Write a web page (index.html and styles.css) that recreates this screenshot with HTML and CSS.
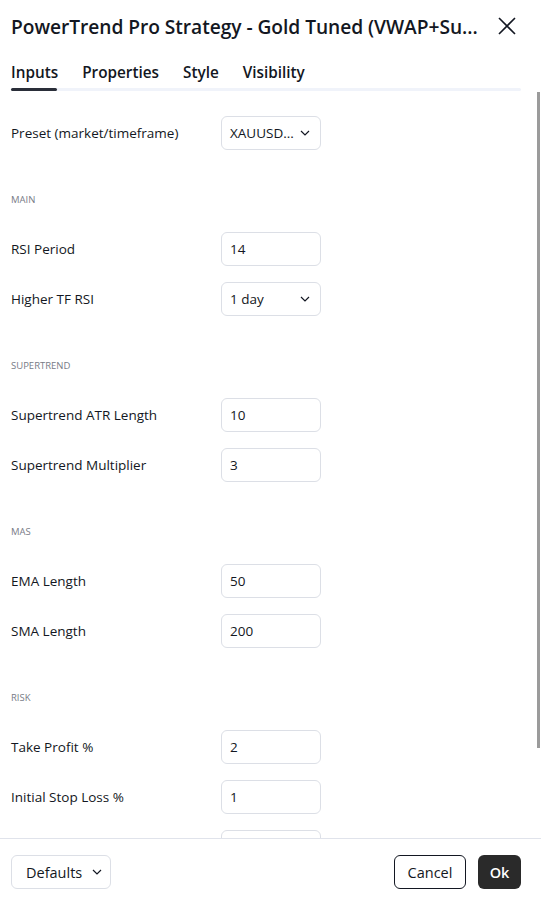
FILE: index.html
```html
<!DOCTYPE html>
<html>
<head>
<meta charset="utf-8">
<link rel="stylesheet" href="styles.css">
</head>
<body>
<div class="dialog">
  <div class="header">
    <div class="title">PowerTrend Pro Strategy - Gold Tuned (VWAP+Su...</div>
    <svg class="close" width="18" height="18" viewBox="0 0 18 18"><path d="M1 1L17 17M17 1L1 17" stroke="#131722" stroke-width="1.6" fill="none"/></svg>
  </div>
  <div class="tabs">
    <div class="tab active">Inputs</div>
    <div class="tab">Properties</div>
    <div class="tab">Style</div>
    <div class="tab">Visibility</div>
  </div>
  <div class="track"><div class="track-active"></div></div>
  <div class="body">
    <div class="scrollbar"></div>
    <div class="row"><span class="label">Preset (market/timeframe)</span><div class="field select"><span>XAUUSD...</span><svg class="chev" width="10" height="6" viewBox="0 0 10 6"><path d="M1 1l4 4 4-4" stroke="#131722" stroke-width="1.2" fill="none"/></svg></div></div>
    <div class="group">Main</div>
    <div class="row"><span class="label">RSI Period</span><div class="field"><span>14</span></div></div>
    <div class="row"><span class="label">Higher TF RSI</span><div class="field select"><span>1 day</span><svg class="chev" width="10" height="6" viewBox="0 0 10 6"><path d="M1 1l4 4 4-4" stroke="#131722" stroke-width="1.2" fill="none"/></svg></div></div>
    <div class="group">Supertrend</div>
    <div class="row"><span class="label">Supertrend ATR Length</span><div class="field"><span>10</span></div></div>
    <div class="row"><span class="label">Supertrend Multiplier</span><div class="field"><span>3</span></div></div>
    <div class="group">MAs</div>
    <div class="row"><span class="label">EMA Length</span><div class="field"><span>50</span></div></div>
    <div class="row"><span class="label">SMA Length</span><div class="field"><span>200</span></div></div>
    <div class="group">Risk</div>
    <div class="row"><span class="label">Take Profit %</span><div class="field"><span>2</span></div></div>
    <div class="row"><span class="label">Initial Stop Loss %</span><div class="field"><span>1</span></div></div>
    <div class="row"><span class="label"></span><div class="field"></div></div>
  </div>
  <div class="footer">
    <div class="btn defaults">Defaults<svg class="chev" width="10" height="6" viewBox="0 0 10 6"><path d="M1 1l4 4 4-4" stroke="#131722" stroke-width="1.2" fill="none"/></svg></div>
    <div class="actions">
      <div class="btn cancel">Cancel</div>
      <div class="btn ok">Ok</div>
    </div>
  </div>
</div>
</body>
</html>
```
FILE: styles.css
```css
* { box-sizing: border-box; }
html, body { margin: 0; padding: 0; background: #fff; }
body {
  font-family: "Open Sans", "Noto Sans", sans-serif;
  color: #131722;
  width: 541px;
  height: 901px;
  overflow: hidden;
}
.dialog {
  position: relative;
  width: 541px;
  height: 901px;
  display: flex;
  flex-direction: column;
}
.header {
  height: 52px;
  display: flex;
  align-items: center;
  padding: 0 25px 0 11px;
  justify-content: space-between;
}
.title {
  font-size: 19.2px;
  font-weight: 600;
  white-space: nowrap;
  letter-spacing: -0.05px;
}
.close { flex: none; }
.tabs {
  display: flex;
  gap: 24px;
  padding: 10px 0 0 11px;
  height: 36px;
  align-items: flex-start;
}
.tab {
  font-size: 15.3px;
  font-weight: 600;
  line-height: 20px;
}
.track {
  margin: 0 20px 0 11px;
  height: 3px;
  background: #f0f3fa;
  border-radius: 2px;
}
.track-active {
  width: 46px;
  height: 3px;
  background: #2a2e39;
  border-radius: 2px;
}
.body {
  position: relative;
  flex: 1;
  overflow: hidden;
  padding: 17px 0 0 11px;
}
.scrollbar {
  position: absolute;
  right: 1px;
  top: 1px;
  width: 3px;
  height: 656px;
  background: #9b9b9b;
}
.row {
  height: 50px;
  display: flex;
  align-items: center;
  flex: none;
}
.label {
  width: 210px;
  font-size: 13.5px;
}
.field {
  width: 100px;
  height: 34px;
  border: 1px solid #dcdfe6;
  border-radius: 6px;
  display: flex;
  align-items: center;
  justify-content: space-between;
  padding: 0 10px 0 8px;
  font-size: 13.5px;
}
.chev { flex: none; }
.group {
  height: 66px;
  padding-top: 36px;
  font-size: 9.5px;
  line-height: 12px;
  color: #787b86;
  text-transform: uppercase;
}
.footer {
  height: 63px;
  border-top: 1px solid #e0e3eb;
  display: flex;
  justify-content: space-between;
  align-items: flex-start;
  padding: 16px 20px 0 11px;
  background: #fff;
}
.btn {
  height: 34px;
  border-radius: 6px;
  display: flex;
  align-items: center;
  justify-content: center;
  font-size: 14.5px;
}
.defaults {
  width: 100px;
  border: 1px solid #dcdfe6;
  justify-content: space-between;
  padding: 0 8px 0 14px;
}
.actions { display: flex; gap: 12px; }
.cancel {
  width: 72px;
  border: 1px solid #131722;
}
.ok {
  width: 43px;
  background: #2a2a2a;
  color: #fff;
  font-weight: 600;
}
```
